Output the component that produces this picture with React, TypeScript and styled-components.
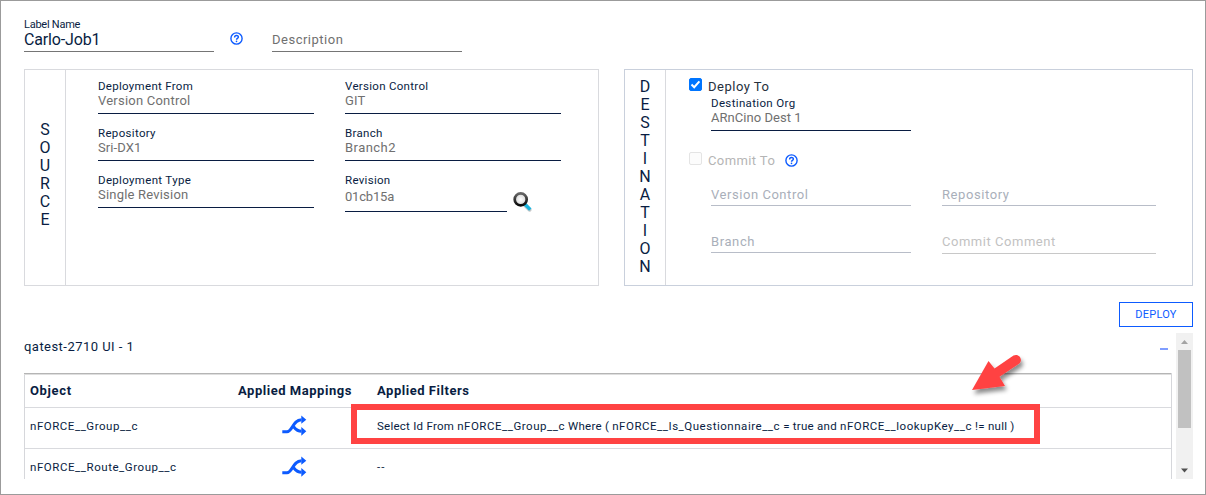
import React from "react";
import styled, { createGlobalStyle } from "styled-components";

const GlobalStyle = createGlobalStyle`
  * { box-sizing: border-box; }
  body { margin: 0; background: #fff; }
`;

const Page = styled.main`
  position: relative;
  width: 1206px;
  height: 495px;
  padding: 17px 12px 0 23px;
  border: 1px solid #9b9b9b;
  background: #fff;
  color: #091d42;
  font-family: Roboto, "Liberation Sans", sans-serif;
  overflow: hidden;
`;

const Txt = styled.span<{ $size: number; $ls?: number; $color?: string; $h?: number; $weight?: number }>`
  display: block;
  flex: none;
  white-space: nowrap;
  font-size: ${(p) => p.$size}px;
  line-height: ${(p) => p.$h ?? 14}px;
  letter-spacing: ${(p) => p.$ls ?? 0}px;
  color: ${(p) => p.$color ?? "inherit"};
  font-weight: ${(p) => p.$weight ?? 400};
`;

const ApiName = styled.span`
  letter-spacing: 0.52px;
`;

const TopRow = styled.header`
  display: flex;
  align-items: flex-end;
  height: 34px;
`;

const Field = styled.div<{ $w: number; $h: number; $line?: string; $top?: number }>`
  flex: none;
  display: flex;
  flex-direction: column;
  width: ${(p) => p.$w}px;
  height: ${(p) => p.$h}px;
  margin-top: ${(p) => p.$top ?? 0}px;
  border-bottom: 1px solid ${(p) => p.$line ?? "#091d42"};
`;

const HelpSlot = styled.span<{ $m: string }>`
  display: flex;
  margin: ${(p) => p.$m};
`;

const Panels = styled.section`
  display: flex;
  gap: 25px;
  margin-top: 17px;
`;

const Panel = styled.div<{ $w: number; $line: string }>`
  display: flex;
  width: ${(p) => p.$w}px;
  height: 217px;
  border: 1px solid ${(p) => p.$line};
`;

const SideTitle = styled.div<{ $top: number }>`
  display: flex;
  flex-direction: column;
  align-items: center;
  width: 41px;
  padding-top: ${(p) => p.$top}px;
  border-right: 1px solid #d9dade;
`;

const SourceGrid = styled.div`
  display: grid;
  grid-template-columns: 216px 216px;
  column-gap: 31px;
  align-content: start;
  padding: 9px 0 0 32px;
`;

const RevisionRow = styled.div`
  display: flex;
  gap: 6px;
`;

const DestBody = styled.div`
  display: flex;
  flex-direction: column;
  padding: 8px 0 0 23px;
`;

const CheckRow = styled.label`
  display: flex;
  height: 17px;
  gap: 6px;
`;

const Box = styled.span<{ $on?: boolean }>`
  display: flex;
  width: 13px;
  height: 13px;
  border-radius: 2px;
  border: 1px solid ${(p) => (p.$on ? "#0075ff" : "#e4e4e4")};
  background: ${(p) => (p.$on ? "#0075ff" : "#fcfcfc")};
`;

const DestFields = styled.div<{ $top: number }>`
  display: flex;
  gap: 31px;
  margin: ${(p) => p.$top}px 0 0 22px;
`;

const Actions = styled.div`
  display: flex;
  justify-content: flex-end;
  margin-top: 16px;
`;

const DeployButton = styled.button`
  display: flex;
  align-items: center;
  justify-content: center;
  width: 74px;
  height: 25px;
  padding: 0;
  border: 1px solid #0d5bff;
  background: #fff;
  color: #0d5bff;
  font-family: inherit;
`;

const Results = styled.section`
  display: flex;
  justify-content: space-between;
  height: 146px;
  margin-top: 6px;
  overflow: hidden;
`;

const ResultBody = styled.div`
  width: 1148px;
`;

const GroupHead = styled.div`
  display: flex;
  justify-content: space-between;
  height: 40px;
  padding: 5px 4px 0 0;
`;

const Minus = styled.span`
  width: 8px;
  height: 2px;
  margin-top: 10px;
  background: #809eff;
`;

const Table = styled.div`
  height: 130px;
  border: 1px solid #d6d7db;
  border-top: 0;
`;

const TableTop = styled.div`
  height: 2px;
  margin-left: -1px;
  border-top: 1px solid #b5b5b5;
  border-bottom: 1px solid #dedede;
`;

const Row = styled.div<{ $h: number; $lift?: number }>`
  display: grid;
  grid-template-columns: 208px 139px 1fr;
  align-items: center;
  height: ${(p) => p.$h}px;
  padding: 0 0 ${(p) => p.$lift ?? 0}px 5px;
  border-bottom: 1px solid #d9dade;
`;

const IconCell = styled.span`
  display: flex;
  padding-left: 44px;
`;

const Scrollbar = styled.div`
  display: flex;
  flex-direction: column;
  align-items: center;
  width: 17px;
  height: 146px;
  background: #f1f1f1;
`;

const Thumb = styled.span`
  width: 13px;
  height: 78px;
  background: #c1c1c1;
`;

const Spacer = styled.span`
  flex: 1;
`;

const Highlight = styled.div`
  position: absolute;
  left: 350px;
  top: 403px;
  width: 689px;
  height: 40px;
  border: 6px solid #ff4343;
`;

const Pointer = styled.svg`
  position: absolute;
  left: 961px;
  top: 344px;
`;

const Help = () => (
  <svg width="13" height="13" viewBox="0 0 13 13" fill="none">
    <circle cx="6.5" cy="6.5" r="5.6" stroke="#0d5bff" strokeWidth="1.4" />
    <path d="M4.6 5.4C4.6 2.9 8.4 2.9 8.4 5.1c0 1.3-1.8 1.3-1.9 2.6" stroke="#0d5bff" strokeWidth="1.4" />
    <circle cx="6.5" cy="9.4" r=".8" fill="#0d5bff" />
  </svg>
);

const Search = () => (
  <svg width="20" height="21" viewBox="0 0 20 21">
    <defs>
      <radialGradient id="lens"><stop offset="0" stopColor="#fff" /><stop offset="1" stopColor="#d4d4d4" /></radialGradient>
      <linearGradient id="rim" x1="0" y1="0" x2="0" y2="1"><stop offset="0" stopColor="#666" /><stop offset="1" stopColor="#080808" /></linearGradient>
    </defs>
    <path d="M11.5 13.5l5 5.2" stroke="#5b6265" strokeWidth="4" strokeLinecap="round" opacity=".35" />
    <path d="M11.7 13l5.6 5.6" stroke="#18b5df" strokeWidth="3.4" />
    <circle cx="7.7" cy="8.4" r="6" fill="url(#lens)" stroke="url(#rim)" strokeWidth="2.7" />
  </svg>
);

const Shuffle = () => (
  <svg width="25" height="21" viewBox="0 0 25 21" fill="none">
    <path d="M.3 16.8H5C10.5 16.8 10.8 4.7 19.5 4.7M10.8 10.8C13 13.3 14.5 16.3 19.5 16.3" stroke="#0d5bff" strokeWidth="3" />
    <path d="M19.3.4L24.3 4.7L19.3 8.8ZM19.3 12.1L24.3 16.3L19.3 20.7Z" fill="#0d5bff" />
  </svg>
);

const GREY = "#707070";

const sourceFields = [
  ["Deployment From", 0.3, "Version Control", 0.22],
  ["Version Control", 0.3, "GIT", 0.1],
  ["Repository", 0.33, "Sri-DX1", 0.1],
  ["Branch", 0.3, "Branch2", 0.45],
  ["Deployment Type", 0.33, "Single Revision", 0.2],
] as const;

const Letters = ({ word }: { word: string }) => (
  <>{word.split("").map((c, i) => <Txt key={i} $size={16} $h={18}>{c}</Txt>)}</>
);

export default function App() {
  return (
    <>
      <GlobalStyle />
      <Page>
        <TopRow>
          <Field $w={190} $h={34} $line="#757575">
            <Txt $size={11} $ls={-0.25}>Label Name</Txt>
            <Txt $size={16} $ls={-0.15} $h={16}>Carlo-Job1</Txt>
          </Field>
          <HelpSlot $m="0 29px 7px 16px"><Help /></HelpSlot>
          <Field $w={190} $h={20} $line="#757575">
            <Txt $size={13} $ls={0.5} $h={16} $color={GREY}>Description</Txt>
          </Field>
        </TopRow>

        <Panels>
          <Panel $w={575} $line="#d9dade">
            <SideTitle $top={51}><Letters word="SOURCE" /></SideTitle>
            <SourceGrid>
              {sourceFields.map(([label, ls, value, vls], i) => (
                <Field key={i} $w={216} $h={35} $top={i < 2 ? 0 : 12}>
                  <Txt $size={11.5} $ls={ls} $h={15}>{label}</Txt>
                  <Txt $size={13} $ls={vls} $color={GREY}>{value}</Txt>
                </Field>
              ))}
              <RevisionRow>
                <Field $w={162} $h={39} $top={12}>
                  <Txt $size={11.5} $ls={0.3} $h={15}>Revision</Txt>
                  <Txt $size={13} $ls={-0.2} $color={GREY} $h={17}>01cb15a</Txt>
                </Field>
                <HelpSlot $m="30px 0 0"><Search /></HelpSlot>
              </RevisionRow>
            </SourceGrid>
          </Panel>

          <Panel $w={569} $line="#c9d0dc">
            <SideTitle $top={8}><Letters word="DESTINATION" /></SideTitle>
            <DestBody>
              <CheckRow>
                <Box $on>
                  <svg width="11" height="11" viewBox="0 0 11 11" fill="none"><path d="M1.5 5.5L4.2 8.2L9.4 2.3" stroke="#fff" strokeWidth="2" /></svg>
                </Box>
                <Txt $size={13} $ls={0.5} $h={17} $color="#26303d">Deploy To</Txt>
              </CheckRow>
              <DestFields $top={1}>
                <Field $w={200} $h={35}>
                  <Txt $size={11.5} $ls={0.35} $h={15}>Destination Org</Txt>
                  <Txt $size={13} $ls={0.05} $color={GREY}>ARnCino Dest 1</Txt>
                </Field>
              </DestFields>
              <HelpSlot $m="21px 0 0">
                <CheckRow>
                  <Box />
                  <Txt $size={13} $ls={0.4} $h={17} $color="#b5b5b5">Commit To</Txt>
                </CheckRow>
                <HelpSlot $m="2px 0 0 10px"><Help /></HelpSlot>
              </HelpSlot>
              <DestFields $top={19}>
                <Field $w={200} $h={18} $line="#b8bdc8"><Txt $size={13} $ls={0.55} $color="#a9afba">Version Control</Txt></Field>
                <Field $w={214} $h={18} $line="#b8bdc8"><Txt $size={13} $ls={0.58} $color="#a9afba">Repository</Txt></Field>
              </DestFields>
              <DestFields $top={29}>
                <Field $w={200} $h={18} $line="#b8bdc8"><Txt $size={13} $ls={0.6} $color="#a9afba">Branch</Txt></Field>
                <Field $w={214} $h={19} $line="#c8c8c8"><Txt $size={13} $ls={0.53} $color="#c2c2c2">Commit Comment</Txt></Field>
              </DestFields>
            </DestBody>
          </Panel>
        </Panels>

        <Actions>
          <DeployButton><Txt $size={11} $ls={0.25}>DEPLOY</Txt></DeployButton>
        </Actions>

        <Results>
          <ResultBody>
            <GroupHead>
              <Txt $size={13} $h={18} $ls={0.46}>qatest-2710 UI - 1</Txt>
              <Minus />
            </GroupHead>
            <Table>
              <TableTop />
              <Row $h={33}>
                <Txt $size={13} $ls={0.65} $weight={700}>Object</Txt>
                <Txt $size={13} $ls={0.53} $weight={700}>Applied Mappings</Txt>
                <Txt $size={13} $ls={0.53} $weight={700}>Applied Filters</Txt>
              </Row>
              <Row $h={41} $lift={5}>
                <Txt $size={11.5} $ls={0.53}>nFORCE__Group__c</Txt>
                <IconCell><Shuffle /></IconCell>
                <Txt $size={11.5} $ls={0.25}>
                  Select Id From <ApiName>nFORCE__Group__c</ApiName> Where ( <ApiName>nFORCE__Is_Questionnaire__c</ApiName> = true and <ApiName>nFORCE__lookupKey__c</ApiName> != null )
                </Txt>
              </Row>
              <Row $h={41} $lift={5}>
                <Txt $size={11.5} $ls={0.55}>nFORCE__Route_Group__c</Txt>
                <IconCell><Shuffle /></IconCell>
                <Txt $size={11.5} $ls={1}>--</Txt>
              </Row>
            </Table>
          </ResultBody>
          <Scrollbar>
            <svg width="17" height="17" viewBox="0 0 17 17"><path d="M5 11L8.5 7L12 11Z" fill="#a3a3a3" /></svg>
            <Thumb />
            <Spacer />
            <svg width="17" height="17" viewBox="0 0 17 17"><path d="M5 6.5L8.5 10.5L12 6.5Z" fill="#505050" /></svg>
          </Scrollbar>
        </Results>

        <Highlight />
        <Pointer width="66" height="62" viewBox="0 0 66 62">
          <defs>
            <filter id="shade" x="-20%" y="-20%" width="150%" height="150%">
              <feDropShadow dx="2" dy="4" stdDeviation="2" floodColor="#000" floodOpacity=".45" />
            </filter>
          </defs>
          <path d="M10 45L26.5 16L32.5 23.5L51.5 10.6C57.5 8 61.5 15.5 57 18.8L37.5 31.7L43 41Z" fill="#ff4343" filter="url(#shade)" />
        </Pointer>
      </Page>
    </>
  );
}
